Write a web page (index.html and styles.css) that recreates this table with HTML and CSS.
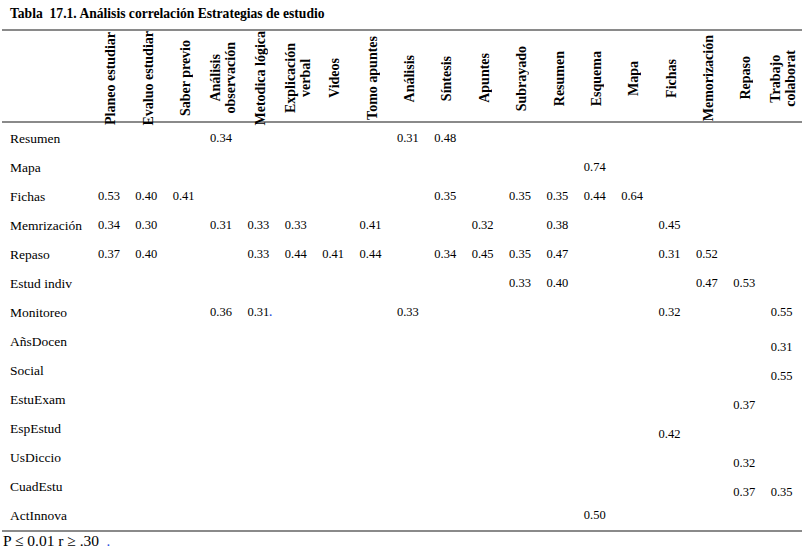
FILE: index.html
```html
<!DOCTYPE html>
<html lang="es">
<head>
<meta charset="utf-8">
<title>Tabla 17.1</title>
<link rel="stylesheet" href="styles.css">
</head>
<body>
<div class="title">Tabla&nbsp; 17.1. Análisis correlación Estrategias de estudio</div>
<div class="table">
  <div class="row head">
    <div></div>
    <div class="h"><span>Planeo estudiar</span></div>
    <div class="h"><span>Evaluo estudiar</span></div>
    <div class="h"><span>Saber previo</span></div>
    <div class="h"><span>Análisis<br>observación</span></div>
    <div class="h"><span>Metodica lógica</span></div>
    <div class="h"><span>Explicación<br>verbal</span></div>
    <div class="h"><span>Videos</span></div>
    <div class="h"><span>Tomo apuntes</span></div>
    <div class="h"><span>Análisis</span></div>
    <div class="h"><span>Síntesis</span></div>
    <div class="h"><span>Apuntes</span></div>
    <div class="h"><span>Subrayado</span></div>
    <div class="h"><span>Resumen</span></div>
    <div class="h"><span>Esquema</span></div>
    <div class="h"><span>Mapa</span></div>
    <div class="h"><span>Fichas</span></div>
    <div class="h"><span>Memorización</span></div>
    <div class="h"><span>Repaso</span></div>
    <div class="h"><span>Trabajo<br>colaborat</span></div>
  </div>
  <div class="body">
    <div class="row">
      <div class="lbl">Resumen</div>
      <div></div><div></div><div></div><div class="v">0.34</div><div></div><div></div><div></div><div></div><div class="v">0.31</div><div class="v">0.48</div><div></div><div></div><div></div><div></div><div></div><div></div><div></div><div></div><div></div>
    </div>
    <div class="row">
      <div class="lbl">Mapa</div>
      <div></div><div></div><div></div><div></div><div></div><div></div><div></div><div></div><div></div><div></div><div></div><div></div><div></div><div class="v">0.74</div><div></div><div></div><div></div><div></div><div></div>
    </div>
    <div class="row">
      <div class="lbl">Fichas</div>
      <div class="v">0.53</div><div class="v">0.40</div><div class="v">0.41</div><div></div><div></div><div></div><div></div><div></div><div></div><div class="v">0.35</div><div></div><div class="v">0.35</div><div class="v">0.35</div><div class="v">0.44</div><div class="v">0.64</div><div></div><div></div><div></div><div></div>
    </div>
    <div class="row">
      <div class="lbl">Memrización</div>
      <div class="v">0.34</div><div class="v">0.30</div><div></div><div class="v">0.31</div><div class="v">0.33</div><div class="v">0.33</div><div></div><div class="v">0.41</div><div></div><div></div><div class="v">0.32</div><div></div><div class="v">0.38</div><div></div><div></div><div class="v">0.45</div><div></div><div></div><div></div>
    </div>
    <div class="row">
      <div class="lbl">Repaso</div>
      <div class="v">0.37</div><div class="v">0.40</div><div></div><div></div><div class="v">0.33</div><div class="v">0.44</div><div class="v">0.41</div><div class="v">0.44</div><div></div><div class="v">0.34</div><div class="v">0.45</div><div class="v">0.35</div><div class="v">0.47</div><div></div><div></div><div class="v">0.31</div><div class="v">0.52</div><div></div><div></div>
    </div>
    <div class="row">
      <div class="lbl">Estud indiv</div>
      <div></div><div></div><div></div><div></div><div></div><div></div><div></div><div></div><div></div><div></div><div></div><div class="v">0.33</div><div class="v">0.40</div><div></div><div></div><div></div><div class="v">0.47</div><div class="v">0.53</div><div></div>
    </div>
    <div class="row">
      <div class="lbl">Monitoreo</div>
      <div></div><div></div><div></div><div class="v">0.36</div><div class="v">0.31<span class="mark">.</span></div><div></div><div></div><div></div><div class="v">0.33</div><div></div><div></div><div></div><div></div><div></div><div></div><div class="v">0.32</div><div></div><div></div><div class="v">0.55</div>
    </div>
    <div class="row">
      <div class="lbl">AñsDocen</div>
      <div></div><div></div><div></div><div></div><div></div><div></div><div></div><div></div><div></div><div></div><div></div><div></div><div></div><div></div><div></div><div></div><div></div><div></div><div class="v lo">0.31</div>
    </div>
    <div class="row">
      <div class="lbl">Social</div>
      <div></div><div></div><div></div><div></div><div></div><div></div><div></div><div></div><div></div><div></div><div></div><div></div><div></div><div></div><div></div><div></div><div></div><div></div><div class="v lo">0.55</div>
    </div>
    <div class="row">
      <div class="lbl">EstuExam</div>
      <div></div><div></div><div></div><div></div><div></div><div></div><div></div><div></div><div></div><div></div><div></div><div></div><div></div><div></div><div></div><div></div><div></div><div class="v lo">0.37</div><div></div>
    </div>
    <div class="row">
      <div class="lbl">EspEstud</div>
      <div></div><div></div><div></div><div></div><div></div><div></div><div></div><div></div><div></div><div></div><div></div><div></div><div></div><div></div><div></div><div class="v lo">0.42</div><div></div><div></div><div></div>
    </div>
    <div class="row">
      <div class="lbl">UsDiccio</div>
      <div></div><div></div><div></div><div></div><div></div><div></div><div></div><div></div><div></div><div></div><div></div><div></div><div></div><div></div><div></div><div></div><div></div><div class="v lo">0.32</div><div></div>
    </div>
    <div class="row">
      <div class="lbl">CuadEstu</div>
      <div></div><div></div><div></div><div></div><div></div><div></div><div></div><div></div><div></div><div></div><div></div><div></div><div></div><div></div><div></div><div></div><div></div><div class="v lo">0.37</div><div class="v lo">0.35</div>
    </div>
    <div class="row">
      <div class="lbl">ActInnova</div>
      <div></div><div></div><div></div><div></div><div></div><div></div><div></div><div></div><div></div><div></div><div></div><div></div><div></div><div class="v">0.50</div><div></div><div></div><div></div><div></div><div></div>
    </div>
  </div>
</div>
<div class="foot">P ≤ 0.01 r ≥ .30 <span class="mark">.</span></div>
</body>
</html>
```

FILE: styles.css
```css
html, body {
  margin: 0;
  padding: 0;
  background: #fff;
}
body {
  font-family: "Liberation Serif", "Times New Roman", serif;
  color: #000;
  width: 807px;
  height: 552px;
  overflow: hidden;
}
.title {
  height: 29px;
  line-height: 28px;
  padding-left: 10px;
  font-weight: bold;
  font-size: 13.6px;
}
.table {
  margin-left: 2px;
  width: 800px;
  border-top: 2px solid #8a8a8a;
  border-bottom: 2px solid #8a8a8a;
}
.row {
  display: grid;
  grid-template-columns: 90px repeat(19, 1fr);
  height: 29px;
  align-items: center;
}
.head {
  height: 90px;
  border-bottom: 2px solid #8a8a8a;
  align-items: stretch;
}
.h {
  display: flex;
  align-items: center;
  justify-content: center;
  overflow: visible;
}
.h span {
  writing-mode: vertical-rl;
  transform: rotate(180deg);
  font-weight: bold;
  font-size: 14px;
  line-height: 15px;
  text-align: center;
  white-space: nowrap;
}
.body {
  padding-top: 1px;
}
.lbl {
  padding-left: 8px;
  font-size: 13.5px;
  white-space: nowrap;
}
.v {
  padding-left: 6px;
  font-size: 12.5px;
  white-space: nowrap;
}
.v.lo {
  padding-top: 11px;
}
.mark {
  color: #2a4fe0;
  font-size: 11px;
  font-weight: bold;
}
.foot {
  padding-left: 3px;
  font-size: 15.5px;
  line-height: 18px;
}
.foot .mark {
  margin-left: 4px;
}
```
